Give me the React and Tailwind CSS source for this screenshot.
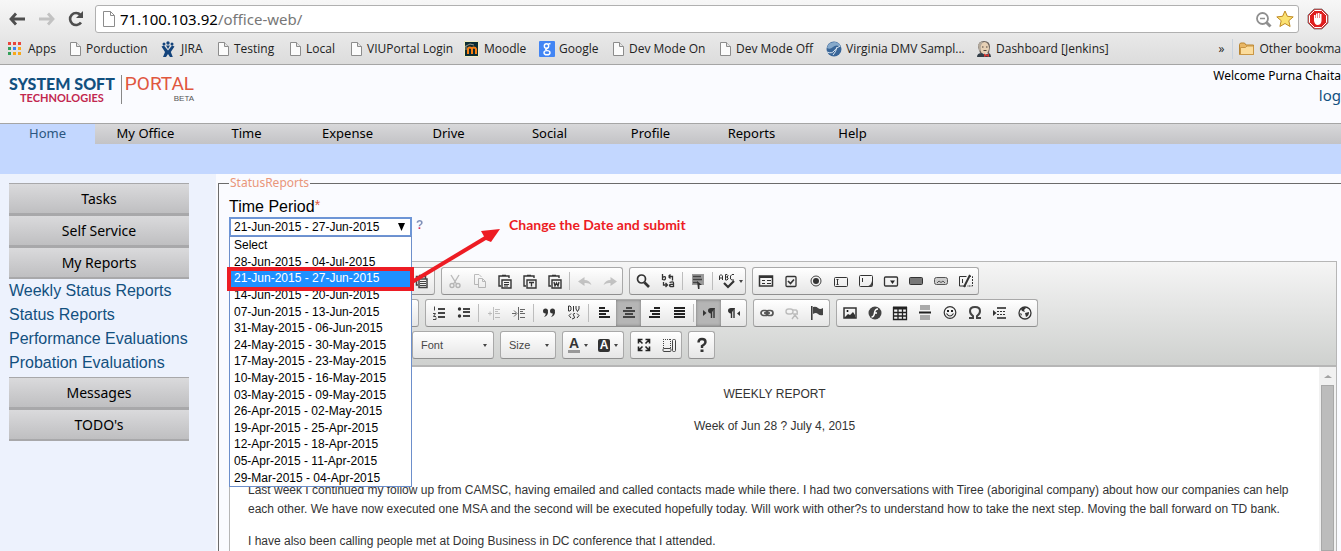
import React from "react";

const bookmarks = [
  { name: "Apps", icon: "apps", width: "w-[62px]" },
  { name: "Porduction", icon: "page", width: "w-[91px]" },
  { name: "JIRA", icon: "jira", width: "w-[57px]" },
  { name: "Testing", icon: "page", width: "w-[72px]" },
  { name: "Local", icon: "page", width: "w-[61px]" },
  { name: "VIUPortal Login", icon: "page", width: "w-[113px]" },
  { name: "Moodle", icon: "moodle", width: "w-[75px]" },
  { name: "Google", icon: "google", width: "w-[74px]" },
  { name: "Dev Mode On", icon: "page", width: "w-[107px]" },
  { name: "Dev Mode Off", icon: "page", width: "w-[106px]" },
  { name: "Virginia DMV Sampl...", icon: "globe", width: "w-[150px]" },
  { name: "Dashboard [Jenkins]", icon: "jenkins", width: "w-[140px]" },
];

const tabs = ["My Office", "Time", "Expense", "Drive", "Social", "Profile", "Reports", "Help"];

const periods = [
  "Select",
  "28-Jun-2015 - 04-Jul-2015",
  "21-Jun-2015 - 27-Jun-2015",
  "14-Jun-2015 - 20-Jun-2015",
  "07-Jun-2015 - 13-Jun-2015",
  "31-May-2015 - 06-Jun-2015",
  "24-May-2015 - 30-May-2015",
  "17-May-2015 - 23-May-2015",
  "10-May-2015 - 16-May-2015",
  "03-May-2015 - 09-May-2015",
  "26-Apr-2015 - 02-May-2015",
  "19-Apr-2015 - 25-Apr-2015",
  "12-Apr-2015 - 18-Apr-2015",
  "05-Apr-2015 - 11-Apr-2015",
  "29-Mar-2015 - 04-Apr-2015",
];

const ui = "font-['Noto_Sans',sans-serif]";

function BookmarkIcon({ kind }) {
  if (kind === "apps")
    return (
      <svg className="size-4 shrink-0" viewBox="0 0 16 16" shapeRendering="crispEdges">
        <path fill="#e8453c" d="M0 1h3v3H0zM5 1h3v3H5zM10 1h3v3h-3z" />
        <path fill="#34a05a" d="M0 6h3v3H0zM0 11h3v3H0z" />
        <path fill="#3b82f0" d="M5 6h3v3H5z" />
        <path fill="#f7a81b" d="M10 6h3v3h-3zM5 11h3v3H5zM10 11h3v3h-3z" />
      </svg>
    );
  if (kind === "jira")
    return (
      <svg className="size-4 shrink-0" viewBox="0 0 16 16" fill="#14447c">
        <circle cx="7" cy="2" r="1.7" />
        <circle cx="3" cy="3" r="1.5" />
        <circle cx="11" cy="3" r="1.5" />
        <path d="M.5 5.500 3 4.500l4 5 4-5 2.500 1-3.700 5.500 2 5H9l-2-3-2 3H2l2-5z" />
        <path d="M5 4.500h4L7 8z" />
      </svg>
    );
  if (kind === "moodle")
    return (
      <svg className="size-4 shrink-0" viewBox="0 0 16 16">
        <path fill="#0c2d33" stroke="#f3eec2" d="M.5.5h14v15H.5z" />
        <path fill="none" stroke="#f98012" strokeWidth="2" d="M4 13V8q0-1.500 1.800-1.500T8 8v5M8 8q0-1.500 1.800-1.500T12 8v5" />
        <path fill="none" stroke="#9b9b8b" d="M1 5.500 6 3l4 1M2 5v4" />
      </svg>
    );
  if (kind === "google")
    return (
      <svg className="size-4 shrink-0" viewBox="0 0 16 16">
        <rect width="16" height="16" rx="1" fill="#4285f4" />
        <g fill="none" stroke="#fff" strokeWidth="1.400">
          <circle cx="7.500" cy="5" r="2.200" />
          <path d="M9.300 3.200 11.500 2.500M9 7q-4 1-1 2.300" />
          <ellipse cx="8" cy="11.700" rx="3" ry="2.100" />
        </g>
      </svg>
    );
  if (kind === "globe")
    return (
      <svg className="size-4 shrink-0" viewBox="0 0 16 16">
        <circle cx="8" cy="8" r="7.500" fill="#3a6698" />
        <path fill="#86a9cb" d="M1 7Q2 1 9 1q5 1 6 5-5-3-8 0t-6 1" />
        <path fill="none" stroke="#dce7f2" d="M1 11q5 2 7-1t6-5M7 14q3-3 4-8" />
      </svg>
    );
  if (kind === "jenkins")
    return (
      <svg className="size-4 shrink-0" viewBox="0 0 16 16">
        <path fill="#6b625c" d="M2 6Q2 0 8 0t6 6l-1 6H4z" />
        <ellipse cx="8.500" cy="7" rx="4.500" ry="6" fill="#e6d0b5" />
        <path fill="#b4ab9e" d="M2 4q2-4 5-3L4.500 5 5 9 3 10z" />
        <path fill="#333e48" d="M1 16q0-4 5-4l3 2 4-2q2 1 2 4z" />
        <path fill="#d33833" d="m8 12.500 2.500 1.500 2.500-1.500V16l-2.500-1L8 16z" />
        <path stroke="#4b4039" d="M6 6h1.500M10 6h1.500M7.500 9.500h3" />
      </svg>
    );
  return <PageIcon />;
}

function PageIcon() {
  return (
    <svg className="h-4 w-3 shrink-0" viewBox="0 0 12 16">
      <path fill="#fbfbfb" stroke="#8c8c8c" d="M.5 1.500h6l4 4v9H.5z" />
      <path fill="#e4e4e4" stroke="#8c8c8c" d="M6.500 1.500v4h4" />
    </svg>
  );
}

function FolderIcon() {
  return (
    <svg className="size-4 shrink-0" viewBox="0 0 16 16">
      <path fill="#e9b765" stroke="#b98531" d="M.5 13.500V3.500l1-1.500h4l1.500 2h7.500v9.500z" />
      <path fill="#fbdc9c" stroke="#c99645" d="M1.500 13.500V6.500h5l1.500-1.500h6.500v8.500z" />
    </svg>
  );
}

/* Editor toolbar glyphs, each on a 16 x 16 grid. */
const glyphs = {
  templates: <><path fill="none" stroke="#444" strokeWidth="1.500" d="M4 12H2.500V3.500h9V6M5 2.500h4M5 6h8v8.500H5z" /><path stroke="#444" d="M6 8.500h6M6 10.500h6M6 12.500h6" /></>,
  cut: <g fill="none" stroke="#333" strokeWidth="1.400"><path d="m4 2 5.500 9M12 2 6.500 11" /><circle cx="5" cy="12.500" r="2" /><circle cx="11" cy="12.500" r="2" /></g>,
  copy: <g fill="none" stroke="#333"><path d="M6 11.500H2.500v-10H7L9.500 4M6.500 5.500h4l3 3v6h-7zM10.500 5.500v3h3" /></g>,
  paste: <PasteBase><path stroke="#333" d="M7 9.500h5M7 11.500h5M7 13h4" /></PasteBase>,
  pasteText: <PasteBase><path stroke="#333" strokeWidth="1.300" d="M7 9.500h5M9.500 9.500v4" /></PasteBase>,
  pasteWord: <PasteBase><path fill="none" stroke="#333" strokeWidth="1.300" d="m7 9 1 4 1.500-3 1.500 3 1-4" /></PasteBase>,
  undo: <path fill="#555" d="M1 8.500 7.500 4v3q5 0 7 5-3-2.500-7-2v3z" />,
  redo: <path fill="#555" d="M15 8.500 8.500 4v3q-5 0-7 5 3-2.500 7-2v3z" />,
  find: <g fill="none" stroke="#333"><circle cx="6.500" cy="6" r="4" strokeWidth="1.700" /><path strokeWidth="2.600" d="m9.500 9.500 4.500 4.500" /></g>,
  replace: <g fill="none" stroke="#333" strokeWidth="1.300"><path d="M2.500 1v6M2.500 4.500q3-2 3 .5t-3 1.500M9.500 9.500q4-1.500 4 .5v4M13.500 11.500q-4-.5-4 1t4 1M8.500 3.500h4v4M8.500 3.500l2-2M8.500 3.500l2 2M3.500 9v3h4M5.500 10l2 2-2 2" /></g>,
  selectAll: <><path fill="#999" d="M2 1h12v11H2z" /><path stroke="#444" strokeWidth="1.400" d="M3 3.500h8M3 6.500h9M3 9.500h5" /><path fill="#333" d="m7 8 5 4H9.500v4H8z" /></>,
  form: <g fill="none" stroke="#333"><rect x="1.500" y="3" width="13" height="10" strokeWidth="1.500" /><path strokeWidth="2" d="M2 4h12" /><path d="M4 7.500h3M9 7.500h4M4 10.500h3M9 10.500h4" /></g>,
  checkbox: <g fill="none" stroke="#333"><rect x="3" y="3.500" width="10" height="10" rx="1" strokeWidth="1.300" /><path strokeWidth="1.700" d="m5 8 2.500 2.500L11 6.500" /></g>,
  radio: <><circle cx="8" cy="8" r="5" fill="none" stroke="#444" /><circle cx="8" cy="8" r="3" fill="#333" /></>,
  textField: <g fill="none" stroke="#333"><rect x="1.500" y="4.500" width="13" height="9" rx="1" /><path d="M4.500 6.500v5M3.500 6.500h2M3.500 11.500h2" /></g>,
  textArea: <><rect x="1.500" y="2.500" width="13" height="11" rx="1" fill="none" stroke="#333" /><path stroke="#333" d="M4.500 5v4" /><path fill="#444" d="M14 8v5.500H9q4-1 5-5.500" /></>,
  dropDown: <><rect x="1.500" y="4" width="13" height="9" rx="1" fill="none" stroke="#333" strokeWidth="1.300" /><path fill="#222" d="M7 7.500h5L9.500 11z" /></>,
  formButton: <rect x="1.500" y="4.500" width="13" height="7" rx="1" fill="#777" stroke="#333" />,
  imageButton: <><rect x="1.500" y="4.500" width="13" height="7" rx="2" fill="#ccc" stroke="#555" /><path fill="none" stroke="#555" d="m4 10 2-2 2 1.500L10 8l2 2" /></>,
  hidden: <g fill="none" stroke="#333"><path d="M8.500 3.500H1.500v9.500h6.500" /><path strokeDasharray="2 1" d="M11 3.500h3.500v9.500H9" /><path d="M4.500 6v4" /><path strokeWidth="2" d="m12 2-6 12" /></g>,
  numbered: <><path stroke="#444" strokeWidth="2" d="M7 4h7M7 8h7M7 12h7" /><path fill="none" stroke="#444" d="M3.500 1.500v4M2 8.500h2.500l-2 3h2.500M2 14.500h3v-2" /></>,
  bulleted: <><path stroke="#444" strokeWidth="2" d="M7 4h7M7 7h7M7 11h7" /><circle cx="3.500" cy="4" r="1.700" fill="#333" /><circle cx="3.500" cy="11" r="1.700" fill="#333" /></>,
  outdent: <path fill="none" stroke="#444" d="M7.500 2v13M9 4.500h5M9 6.500h3M9 8.500h5M9 12.500h5M2 8.500h4M4 6.500v4" />,
  indent: <path fill="none" stroke="#666" d="M7.500 2v13M9 4.500h5M9 6.500h3M9 8.500h5M9 12.500h5M1 8.500h4M3 5.500l3 3-3 3" />,
  quote: <g fill="#333"><circle cx="4.500" cy="6" r="2.500" /><path d="M5 7h2q0 4-4 5 2-2 2-5" /><circle cx="11.500" cy="6" r="2.500" /><path d="M12 7h2q0 4-4 5 2-2 2-5" /></g>,
  div: <g fill="none" stroke="#333"><path d="M2.500 1v5h1.500l1-1V2L4 1zM7.500 1v5.500M10 1v3l1.500 2.500L13 4V1M5 8.500 3 10.500 5 13M11 8.500l2 2-2 2.500M9 8.500q-3 0-1 2.500t-2 3" /></g>,
  left: <path stroke="#222" strokeWidth="2" d="M3 3h6M3 6h10M3 9h7M3 12h11" />,
  center: <path stroke="#444" strokeWidth="2" d="M5 3h6M2 6h12M4 9h8M2 12h12" />,
  right: <path stroke="#222" strokeWidth="2" d="M8 3h6M4 6h10M6 9h8M3 12h11" />,
  justify: <path stroke="#222" strokeWidth="2" d="M3 3h11M3 6h11M3 9h11M3 12h11" />,
  ltr: <><path fill="#333" d="m2 5 3.500 3L2 11z" /><Pilcrow x={0} /></>,
  rtl: <><path fill="#333" d="m14 6-3 2.500 3 2.500z" /><Pilcrow x={-5} /></>,
  link: <g fill="none" stroke="#555" strokeWidth="1.700"><rect x="2" y="5.500" width="7" height="5" rx="2.500" /><rect x="7" y="5.500" width="7" height="5" rx="2.500" /><path d="M5 8h6" /></g>,
  unlink: <g fill="none" stroke="#444" strokeWidth="1.400"><rect x="2" y="4" width="7" height="5" rx="2.500" /><path d="M8 5h4q2 1 1 4M8 14l3-4 3 4M9 9h5" /></g>,
  anchor: <><path stroke="#333" strokeWidth="1.500" d="M2.800 1v14" /><path fill="#444" d="M4 2q3-1 5 1t5 0v7q-3 1-5-1T4 9z" /></>,
  image: <><path fill="none" stroke="#333" strokeWidth="1.500" d="M2 3h12v10H2z" /><circle cx="5.500" cy="6" r="1" /><path fill="#333" d="m3 12 3-3 2 1 3-3 2 3v3H3z" /></>,
  flash: <><circle cx="8" cy="8" r="6.500" fill="#444" /><path fill="none" stroke="#fff" strokeWidth="1.600" d="M11 4Q8 4 7.500 8T4.500 12M7 8h3" /></>,
  table: <g fill="none" stroke="#222"><path strokeWidth="3" d="M1 3h14" /><path strokeWidth="1.300" d="M1.500 2v12.500h13V2M6 4v10M10.500 4v10M1 7.500h14M1 11h14" /></g>,
  rule: <><path fill="#aaa" d="M3 0h10v5H3zM3 10h10v5H3z" /><path stroke="#222" strokeWidth="2" d="M2 7.500h12" /></>,
  smiley: <><circle cx="8" cy="7.500" r="5.800" fill="none" stroke="#333" strokeWidth="1.200" /><path fill="#222" d="M5 5h2v2H5zM9 5h2v2H9z" /><path fill="none" stroke="#333" strokeWidth="1.200" d="M4.500 8.500q3.500 5 7 0" /></>,
  omega: <path fill="none" stroke="#444" strokeWidth="2" d="M2 13h4v-2Q3 9 3 6q0-4 5-4t5 4q0 3-3 5v2h4" />,
  pageBreak: <><path fill="#333" d="m1 5 3.500 3L1 11z" /><path stroke="#555" strokeWidth="2" d="M5 3h9M5 13h9" /><path stroke="#333" strokeDasharray="2 1" d="M5 6.500h9M5 9.500h9" /></>,
  iframe: <><circle cx="8" cy="8" r="6" fill="none" stroke="#333" strokeWidth="1.300" /><path fill="#333" d="M4 4q4-3 5-1L7 5l1 2-3-1zM8 8l4-1q0 4-3 5zM3 8l2 1-1 2z" /></>,
  maximize: <g fill="none" stroke="#222" strokeWidth="1.600"><path d="M2.500 6.500v-4h4M2.500 2.500l4 4M9.500 2.500h4v4M13.500 2.500l-4 4M2.500 9.500v4h4M2.500 13.500l4-4M13.500 9.500v4h-4M13.500 13.500l-4-4" /></g>,
  blocks: <g fill="none" stroke="#444"><path strokeDasharray="1 1" d="M2 2.500h8M2.500 2v9M9.500 2v9" /><rect x="11.500" y="2.500" width="3" height="12" rx="1" /><rect x="2" y="11.500" width="8" height="3" rx="1" /></g>,
  about: <><path fill="none" stroke="#333" strokeWidth="2.400" d="M4.500 5.500q0-3.500 3.500-3.500t3.500 3q0 2-3.500 4v2" /><path fill="#333" d="M6.500 12.500h3V15h-3z" /></>,
};

function PasteBase({ children }) {
  return (
    <>
      <path fill="none" stroke="#333" strokeWidth="1.400" d="M4 13H2V3h10v2M5 2.500h4" />
      <path fill="none" stroke="#333" strokeWidth="1.400" d="M5 7h9v8H5z" />
      {children}
    </>
  );
}

function Pilcrow({ x }) {
  return (
    <g transform={`translate(${x} 0)`}>
      <path fill="#333" d="M14 3h-4Q7 3 7 5.500T10 8.500z" />
      <path stroke="#333" strokeWidth="1.400" d="M10.500 3v10M13 3v10" />
    </g>
  );
}

function Tool({ name, faded, pressed }) {
  return (
    <button
      type="button"
      aria-label={name}
      aria-pressed={pressed}
      className={
        "flex h-full w-[25px] items-center justify-center " +
        (pressed ? "bg-[#b5b5b5] shadow-[inset_0_0_3px_#777]" : "")
      }
    >
      <svg className={"size-4 " + (faded ? "opacity-30" : "")} viewBox="0 0 16 16">
        {glyphs[name]}
      </svg>
    </button>
  );
}

function Divider() {
  return <span className="mx-0.5 h-[18px] w-px bg-[#bdbdbd]" />;
}

function Group({ children, className = "" }) {
  return (
    <div
      className={
        "flex h-7 shrink-0 items-center rounded-[3px] border border-[#a9a9a9] border-b-[#8f8f8f] bg-linear-to-b from-white to-[#e6e6e6] " +
        className
      }
    >
      {children}
    </div>
  );
}

function Caret() {
  return <span className="size-0 border-x-2 border-t-3 border-x-transparent border-t-[#444]" />;
}

function SideButton({ children }) {
  return (
    <button
      type="button"
      className={
        "h-8 w-full border-t border-b-2 border-[#a8a8aa] bg-linear-to-b from-[#dadadc] to-[#bfbfc1] text-[14px] leading-none text-black " +
        ui
      }
    >
      {children}
    </button>
  );
}

function Chrome() {
  return (
    <header className={"shrink-0 border-b border-[#a5a5a5] bg-linear-to-b from-[#f7f7f7] to-[#dcdcdc] " + ui}>
      <div className="flex h-[34px] items-center pt-1">
        <button type="button" aria-label="Back" className="ml-2 flex w-[30px] shrink-0">
          <svg className="size-[18px]" viewBox="0 0 18 18" fill="none" stroke="#4e4e4e" strokeWidth="2.800">
            <path d="M8 3.500 3 9l5 5.500M3 9h14" />
          </svg>
        </button>
        <button type="button" aria-label="Forward" className="flex w-[29px] shrink-0">
          <svg className="size-[18px]" viewBox="0 0 18 18" fill="none" stroke="#c2c2c2" strokeWidth="2.800">
            <path d="m10 3.500 5 5.500-5 5.500M15 9H1" />
          </svg>
        </button>
        <button type="button" aria-label="Reload" className="flex w-7 shrink-0">
          <svg className="size-[18px]" viewBox="0 0 18 18">
            <path fill="none" stroke="#4e4e4e" strokeWidth="2.600" d="M14 12.500A6 6 0 1 1 13.500 5" />
            <path fill="#4e4e4e" d="M16 1v7H9z" />
          </svg>
        </button>
        <div className="flex h-7 min-w-0 flex-1 items-center rounded-[3px] border border-[#b0b0b0] bg-white pr-1 pl-1.5">
          <svg className="h-[18px] w-3.5 shrink-0" viewBox="0 0 14 18">
            <path fill="#fff" stroke="#8c8c8c" d="M1.500 1.500h7l4 4v11h-11zM8.500 1.500v4h4" />
          </svg>
          <div className="ml-1 flex-1 text-[15px] leading-5 text-[#777]">
            <span className="text-black">71.100.103.92</span>/office-web/
          </div>
          <svg className="mr-1 size-[17px]" viewBox="0 0 17 17" fill="none" stroke="#8f8f8f">
            <circle cx="7.500" cy="7.500" r="5.500" strokeWidth="1.800" />
            <path strokeWidth="1.500" d="M5 7.500h5" />
            <path strokeWidth="3" d="m11.500 11.500 4 4" />
          </svg>
          <svg className="size-[18px]" viewBox="0 0 18 18">
            <path fill="#fbe272" stroke="#c08a24" d="m9 1 2.400 5.300 5.800.6-4.400 3.800 1.300 5.800L9 13.500l-5.100 3 1.300-5.800L.8 6.900l5.800-.6z" />
          </svg>
        </div>
        <svg className="mr-3 ml-2 size-[22px] shrink-0" viewBox="0 0 22 22">
          <path fill="#df1f1f" stroke="#8a7b7b" d="M7 1h8l6 6v8l-6 6H7l-6-6V7z" />
          <path fill="none" stroke="#fff" d="M7.500 2.500h7l5 5v7l-5 5h-7l-5-5v-7z" />
          <path fill="#fff" d="M7 7h1.500v3H9V5.500h1.500V10h.5V5h1.500v5h.5V6h1.500v7q-.5 4-4 4-2.500 0-3.500-4z" />
        </svg>
      </div>
      <nav className="flex h-[30px] items-center overflow-hidden pl-2 font-['Open_Sans',sans-serif] text-[12px] whitespace-nowrap text-[#222]">
        {bookmarks.map((b) => (
          <a key={b.name} href="#" className={"flex shrink-0 items-center gap-1 " + b.width}>
            <BookmarkIcon kind={b.icon} />
            <span>{b.name}</span>
          </a>
        ))}
        <button type="button" className="ml-auto px-2">»</button>
        <span className="mr-1.5 h-5 w-px shrink-0 bg-[#c9d2dc]" />
        <a href="#" className="flex shrink-0 items-center gap-1">
          <FolderIcon />
          <span>Other bookma</span>
        </a>
      </nav>
    </header>
  );
}

function Editor() {
  return (
    <div className="flex min-h-0 flex-1 flex-col border-x border-t border-[#b6b6b6]">
      <div className="flex flex-col gap-1 border-b-2 border-[#b6b6b6] bg-linear-to-b from-[#f5f5f5] to-[#cfd1cf] px-[5px] pt-[5px] pb-[6px]">
        <div className="flex gap-1.5">
          <Group className="w-[200px] justify-end"><Tool name="templates" /></Group>
          <Group>
            <Tool name="cut" faded /><Tool name="copy" faded /><Tool name="paste" /><Tool name="pasteText" /><Tool name="pasteWord" />
            <Divider />
            <Tool name="undo" faded /><Tool name="redo" faded />
          </Group>
          <Group>
            <Tool name="find" /><Tool name="replace" />
            <Divider />
            <Tool name="selectAll" />
            <Divider />
            <button type="button" aria-label="Spell check" className="flex h-full w-[30px] items-center justify-center gap-px">
              <svg className="h-4 w-5" viewBox="0 0 20 16" fill="none" stroke="#333">
                <path d="M1.500 7V3l1.500-1.500L4.500 3v4M1.500 5h3M7.500 1.500V7H9l1-1V5L9 4l1-1v-.5l-1-1zM9 4H7.500M16 1.500h-2L12.500 3v3L14 7h2" />
                <path strokeWidth="2.200" d="m6 10 4 4 6-6" />
              </svg>
              <Caret />
            </button>
          </Group>
          <Group>
            <Tool name="form" /><Tool name="checkbox" /><Tool name="radio" /><Tool name="textField" /><Tool name="textArea" />
            <Tool name="dropDown" /><Tool name="formButton" /><Tool name="imageButton" /><Tool name="hidden" />
          </Group>
        </div>
        <div className="flex gap-1.5">
          <Group className="w-[184px]" />
          <Group>
            <Tool name="numbered" /><Tool name="bulleted" />
            <Divider />
            <Tool name="outdent" faded /><Tool name="indent" />
            <Divider />
            <Tool name="quote" /><Tool name="div" />
            <Divider />
            <Tool name="left" /><Tool name="center" pressed /><Tool name="right" /><Tool name="justify" />
            <Divider />
            <Tool name="ltr" pressed /><Tool name="rtl" />
          </Group>
          <Group>
            <Tool name="link" /><Tool name="unlink" faded /><Tool name="anchor" />
          </Group>
          <Group>
            <Tool name="image" /><Tool name="flash" /><Tool name="table" /><Tool name="rule" />
            <Tool name="smiley" /><Tool name="omega" /><Tool name="pageBreak" /><Tool name="iframe" />
          </Group>
        </div>
        <div className="flex gap-1.5 text-[11px] text-[#474747]">
          <Group className="w-[171px]" />
          <Group className="w-[82px]">
            <button type="button" className="flex w-full items-center justify-between pr-1.5 pl-2">Font<Caret /></button>
          </Group>
          <Group className="w-14">
            <button type="button" className="flex w-full items-center justify-between pr-1.5 pl-2">Size<Caret /></button>
          </Group>
          <Group>
            <button type="button" className="flex w-[30px] items-center justify-center gap-1">
              <span className="border-b-3 border-[#999] px-px text-[14px] leading-[13px] font-bold text-[#333]">A</span>
              <Caret />
            </button>
            <button type="button" className="flex w-[30px] items-center justify-center gap-1">
              <span className="rounded-[2px] bg-[#333] px-0.5 text-[12px] leading-[13px] font-bold text-white">A</span>
              <Caret />
            </button>
          </Group>
          <Group><Tool name="maximize" /><Tool name="blocks" /></Group>
          <Group><Tool name="about" /></Group>
        </div>
      </div>
      <div className="flex min-h-0 flex-1 bg-white">
        <article className="min-w-0 flex-1 px-[18px] pt-[18px] text-[12px] leading-[19px] text-[#333]">
          <p className="mb-[13px] text-center">WEEKLY REPORT</p>
          <p className="mb-[45px] text-center">Week of Jun 28 ? July 4, 2015</p>
          <p className="mb-[13px]">
            Last week I continued my follow up from CAMSC, having emailed and called contacts made while there. I had two
            conversations with Tiree (aboriginal company) about how our companies can help each other. We have now executed
            one MSA and the second will be executed hopefully today. Will work with other?s to understand how to take the
            next step. Moving the ball forward on TD bank.
          </p>
          <p>I have also been calling people met at Doing Business in DC conference that I attended.</p>
        </article>
        <div className="flex w-[17px] shrink-0 flex-col items-center bg-[#f1f1f1]">
          <span className="mt-2 mb-[7px] size-0 border-x-4 border-b-3 border-x-transparent border-b-[#a3a3a3]" />
          <span className="w-[13px] flex-1 border border-[#a8a8a8] bg-[#bcbcbc]" />
        </div>
      </div>
    </div>
  );
}

function PeriodPicker() {
  return (
    <div className="relative flex h-11 items-start">
      <select
        id="period"
        defaultValue={periods[2]}
        className="h-5 w-[183px] appearance-none border-2 border-[#6d95d6] bg-white pl-[3px] text-[12px] leading-none text-black"
      >
        {periods.map((p) => (
          <option key={p}>{p}</option>
        ))}
      </select>
      <svg className="pointer-events-none absolute top-1.5 left-[169px] h-2 w-[7px]" viewBox="0 0 7 8">
        <path d="M0 0h7L3.500 8z" />
      </svg>
      <a href="#" className="ml-1 bg-linear-to-b from-[#7f8fb8] from-60% to-[#d5335d] to-60% bg-clip-text text-[12px] leading-4 font-bold text-transparent">?</a>
      <ul
        role="listbox"
        aria-label="Time Period"
        className="absolute top-[19px] left-0 z-10 grid h-[251px] w-[183px] auto-rows-fr border border-[#6d8fcb] bg-white text-[12px] leading-4 text-black"
      >
        {periods.map((p, i) => (
          <li
            key={p}
            role="option"
            aria-selected={i === 2}
            className={"flex items-center pl-1 whitespace-nowrap " + (i === 2 ? "bg-[#1e90ff] text-white" : "")}
          >
            {p}
          </li>
        ))}
      </ul>
      <span className="absolute top-[50px] -left-0.5 z-20 h-6 w-[187px] border-4 border-[#ed1c24]" />
      <svg className="absolute top-2 left-[183px] z-20 h-16 w-[92px]" viewBox="0 0 92 64">
        <path stroke="#ed1c24" strokeWidth="4" d="M0 57 75 12" />
        <path fill="#ed1c24" d="m88 4-9 13-5-2-5-9z" />
      </svg>
      <p className="absolute top-0 left-[280px] font-['Lato',sans-serif] text-[14px] leading-4 font-bold whitespace-nowrap text-[#ed1c24]">
        Change the Date and submit
      </p>
    </div>
  );
}

export default function App() {
  return (
    <div className="flex h-screen flex-col overflow-hidden bg-[#fafbff] font-['Liberation_Sans',Arial,sans-serif] text-black">
      <Chrome />

      <div className="flex h-[58px] shrink-0 items-start justify-between pl-[9px]">
        <a href="#" className="flex items-start gap-[3px] pt-2.5">
          <span className="flex flex-col items-center border-r border-[#888] pr-1.5 font-['Lato',sans-serif]">
            <span className="text-[16px] leading-[17px] font-black text-[#12507f]">SYSTEM SOFT</span>
            <span className="text-[11px] leading-3 font-bold text-[#c2274f]">TECHNOLOGIES</span>
          </span>
          <span className="flex flex-col items-end">
            <span className="font-['Roboto',sans-serif] text-[19px] leading-[18px] text-[#e0573f]">PORTAL</span>
            <span className="text-[8px] leading-[11px] text-[#555]">BETA</span>
          </span>
        </a>
        <div className={"flex flex-col items-end whitespace-nowrap " + ui}>
          <span className="pt-0.5 text-[12px] leading-[18px]">Welcome Purna Chaita</span>
          <a href="#" className="text-[15px] leading-5 text-[#12507f]">log</a>
        </div>
      </div>

      <nav className={"flex h-[21px] shrink-0 border-t border-[#a5a5a5] bg-linear-to-b from-[#d8d8da] to-[#c3c3c6] text-center text-[13px] leading-[18px] " + ui}>
        <a href="#" className="w-[95px] bg-[#c3d7ff] text-[#2b5680]">Home</a>
        {tabs.map((t) => (
          <a key={t} href="#" className="w-[101px]">{t}</a>
        ))}
      </nav>
      <div className="h-[30px] shrink-0 bg-[#c3d7ff]" />

      <div className="flex min-h-0 flex-1">
        <aside className="w-[216px] shrink-0 bg-[#edf2fd] pt-[9px] pr-[27px] pl-[9px]">
          <div className="flex flex-col">
            <SideButton>Tasks</SideButton>
            <SideButton>Self Service</SideButton>
            <SideButton>My Reports</SideButton>
          </div>
          <ul className="pb-0.5 text-[16px] leading-6 whitespace-nowrap text-[#12507f]">
            <li><a href="#">Weekly Status Reports</a></li>
            <li><a href="#">Status Reports</a></li>
            <li><a href="#">Performance Evaluations</a></li>
            <li><a href="#">Probation Evaluations</a></li>
          </ul>
          <div className="flex flex-col">
            <SideButton>Messages</SideButton>
            <SideButton>TODO's</SideButton>
          </div>
        </aside>

        <main className="flex min-w-0 flex-1 pl-0.5">
          <fieldset className="flex min-w-0 flex-1 flex-col border-t border-l border-[#6b6b6b] pr-1 pl-2.5">
            <legend className={"px-px text-[12px] leading-[18px] text-[#e9967a] " + ui}>StatusReports</legend>
            <label htmlFor="period" className="pt-[5px] text-[16px] leading-5">
              Time Period<span className="align-top text-[14px] leading-4 text-[#e0573f]">*</span>
            </label>
            <PeriodPicker />
            <Editor />
          </fieldset>
        </main>
      </div>
    </div>
  );
}
